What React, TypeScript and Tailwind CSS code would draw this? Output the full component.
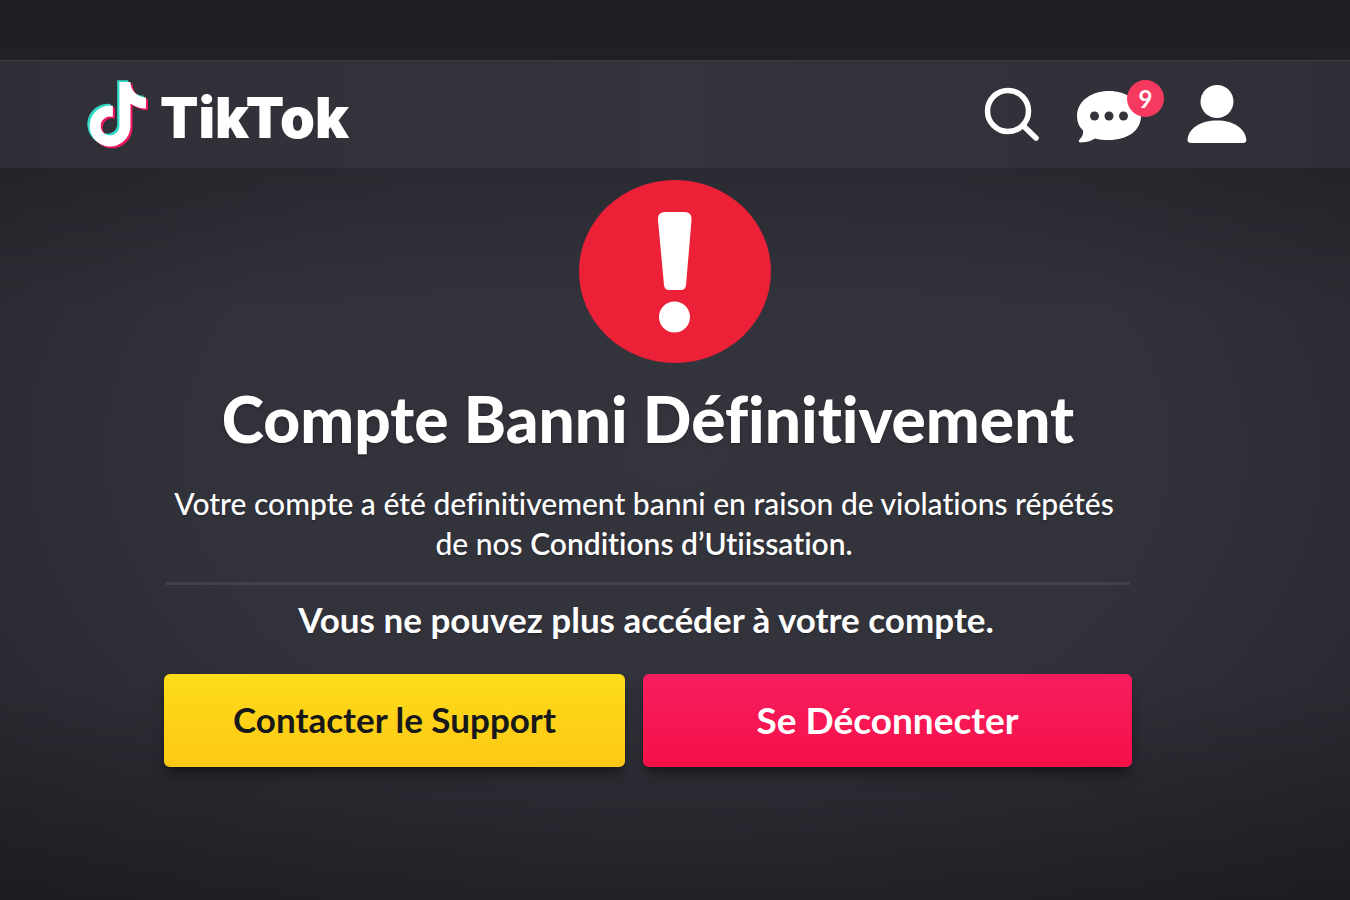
const NOTE_PATH =
  "M448,209.91a210.06,210.06,0,0,1-122.77-39.25V349.38A162.55,162.55,0,1,1,185,188.31V278.2a74.62,74.62,0,1,0,52.23,71.18V0l88,0a121.18,121.18,0,0,0,1.86,22.17h0A122.18,122.18,0,0,0,381,102.39a121.43,121.43,0,0,0,67,20.14Z";

const Logo = () => {
  return (
    <a href="#" className="flex items-center gap-3">
      <svg width="61" height="69" viewBox="-20 -16 484 548" aria-hidden="true">
        <path d={NOTE_PATH} fill="#2fd9c4" transform="translate(-18 -14)" />
        <path d={NOTE_PATH} fill="#f0185c" transform="translate(16 14)" />
        <path d={NOTE_PATH} fill="#ffffff" />
      </svg>
      <span className="mt-2 font-['Inter','Lato',sans-serif] text-[56px] leading-[60px] font-black">
        TikTok
      </span>
    </a>
  );
};

const SearchIcon = () => {
  return (
    <svg width="56" height="56" viewBox="0 0 56 56" fill="none" stroke="#fff" aria-hidden="true">
      <circle cx="24" cy="25" r="20.5" strokeWidth="5.5" />
      <path d="M39 39.5L52 52" strokeWidth="5.5" strokeLinecap="round" />
    </svg>
  );
};

const ChatIcon = () => {
  return (
    <svg width="64" height="52" viewBox="0 0 64 52" aria-hidden="true">
      <path
        d="M32 0C49.500 0 64 10 64 25C64 40 50 49 32 49C26.500 49 22 48.500 18 47.500C13 50.500 7.500 51.500 3 51.500C1.500 51 1.500 49.500 3 48C5.500 45.500 6.500 42.500 6 39.500C2 36 0 31 0 25C0 10 14.500 0 32 0Z"
        fill="#fff"
      />
      <circle cx="17.500" cy="25" r="4.500" fill="#33333b" />
      <circle cx="32" cy="25" r="4.500" fill="#33333b" />
      <circle cx="46.500" cy="25" r="4.500" fill="#33333b" />
    </svg>
  );
};

const UserIcon = () => {
  return (
    <svg width="60" height="58" viewBox="0 0 60 58" fill="#fff" aria-hidden="true">
      <circle cx="30" cy="16.500" r="16.500" />
      <path d="M4 58C1.500 58 0.500 56.500 0.500 54.500C1.500 43 14 35.500 30 35.500C46 35.500 58 43 59.300 54.500C59.500 56.500 58.500 58 56 58Z" />
    </svg>
  );
};

const Header = () => {
  return (
    <header className="flex h-[108px] items-center justify-between border-t border-[#3a3b42] bg-linear-to-r from-[#2f3037] via-[#34343c] to-[#2f3037] pr-[103px] pb-px pl-[87px]">
      <Logo />
      <nav className="flex items-center">
        <button type="button" aria-label="Rechercher" className="mr-[37px]">
          <SearchIcon />
        </button>
        <button type="button" aria-label="Messages" className="relative mt-1.5 mr-[46px]">
          <ChatIcon />
          <span className="absolute -top-[11px] -right-[23px] flex size-[37px] items-center justify-center rounded-full bg-[#f63a5f] text-2xl font-bold">
            9
          </span>
        </button>
        <button type="button" aria-label="Profil">
          <UserIcon />
        </button>
      </nav>
    </header>
  );
};

const AlertBadge = () => {
  return (
    <svg width="193" height="183" viewBox="0 0 193 183" className="mx-auto" role="img" aria-label="Attention">
      <ellipse cx="96" cy="91.500" rx="96" ry="91.500" fill="#ec2138" />
      <path
        d="M86 32H105.500Q113 32 112.500 40L107 105Q106.500 110 102 110H90Q85.500 110 85 105L79 40Q78.500 32 86 32Z"
        fill="#fff"
      />
      <circle cx="95.500" cy="137" r="15.500" fill="#fff" />
    </svg>
  );
};

const App = () => {
  return (
    <div className="flex min-h-screen flex-col bg-[radial-gradient(ellipse_at_center,#34343c_0%,#31323a_50%,#25262c_100%)] font-['Lato','Liberation_Sans',sans-serif] text-white [font-variant-ligatures:none]">
      <div className="h-[60px] bg-linear-to-b from-[#1e1f24] to-[#202127]"></div>
      <Header />
      <main className="grow bg-[linear-gradient(to_bottom,rgb(0_0_0/0.15),transparent_20%,transparent_70%,rgb(0_0_0/0.25))] pt-3 pb-16">
        <AlertBadge />
        <div className="mr-[218px] ml-[164px] text-center">
          <h1 className="mt-5 text-[64px] leading-[72px] font-black whitespace-nowrap text-shadow-md">
            Compte Banni Définitivement
          </h1>
          <p className="mt-7 pr-2 text-[30px] leading-10 font-medium whitespace-nowrap text-shadow-sm">
            Votre compte a été definitivement banni en raison de violations répétés
            <br />
            de nos <span className="font-semibold">Conditions d’Utiissation.</span>
          </p>
          <hr className="mx-0.5 mt-[19px] border-t-[3px] border-[#41424a]" />
          <p className="mt-3 pr-1 text-[35px] leading-11 font-bold text-shadow-sm">
            Vous ne pouvez plus accéder à votre compte.
          </p>
          <div className="mt-[33px] grid grid-cols-[461fr_489fr] gap-[18px] font-bold">
            <button
              type="button"
              className="h-[93px] rounded-md bg-linear-to-b from-[#fddc1a] to-[#fdc815] pb-0.5 text-[35px] text-[#17181a] shadow-lg shadow-black/40"
            >
              Contacter le Support
            </button>
            <button
              type="button"
              className="h-[93px] rounded-md bg-linear-to-b from-[#f71d5f] to-[#f50f48] pb-0.5 text-[37px] shadow-lg shadow-black/40"
            >
              Se Déconnecter
            </button>
          </div>
        </div>
      </main>
    </div>
  );
};

export default App;
